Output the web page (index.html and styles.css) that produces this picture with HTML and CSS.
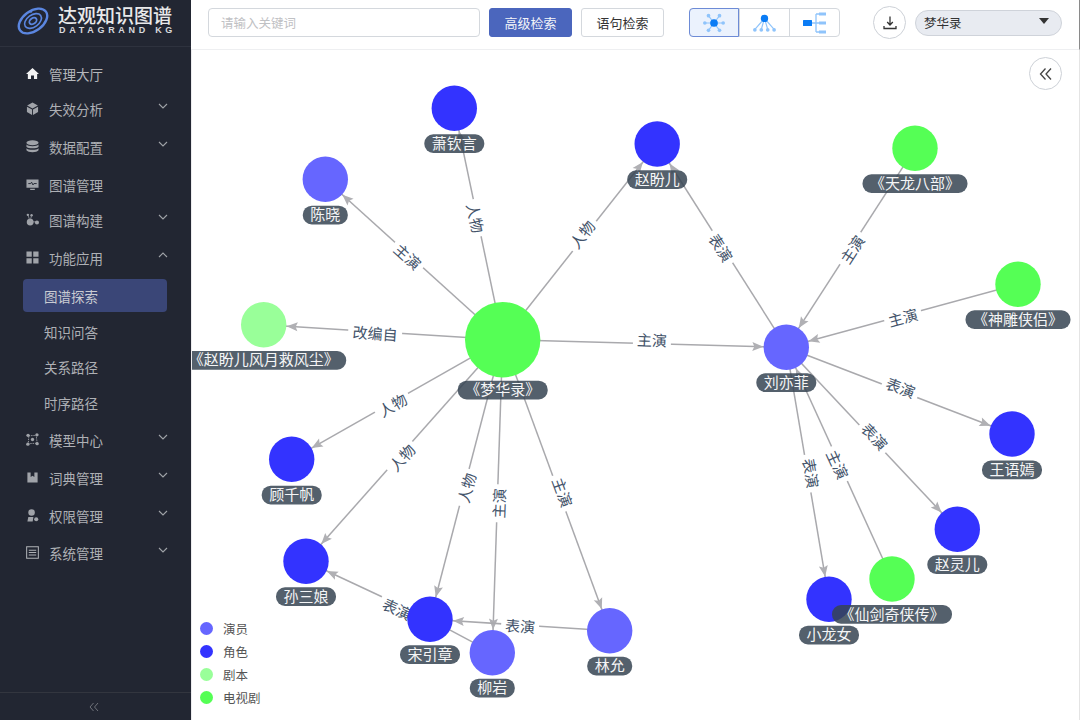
FILE: index.html
```html
<!DOCTYPE html>
<html lang="zh-CN">
<head>
<meta charset="utf-8">
<title>达观知识图谱</title>
<link rel="stylesheet" href="styles.css">
</head>
<body>
<div class="app">
  <aside class="sidebar">
    <div class="brand">
      <svg class="brand-mark" viewBox="0 0 32 28" width="32" height="28">
        <g fill="none" stroke="#5b86e0">
          <ellipse cx="16" cy="14" rx="16" ry="10" stroke-width="2.400" transform="rotate(-36 16 14)"/>
          <ellipse cx="16" cy="14" rx="9.500" ry="6" stroke-width="1.600" transform="rotate(-36 16 14)"/>
          <ellipse cx="16" cy="14" rx="4" ry="2.800" stroke-width="1.800" transform="rotate(-36 16 14)"/>
        </g>
        <circle cx="14" cy="4.500" r="1.200" fill="#5b86e0"/>
      </svg>
      <div class="brand-text">
        <div class="brand-cn">达观知识图谱</div>
        <div class="brand-en">DATAGRAND KG</div>
      </div>
    </div>
    <nav class="nav">
      <a class="item gap0">
        <svg class="ico" viewBox="0 0 14 14"><path d="M7 1.200 14 7.600H12V13H8.600V9.200H5.400V13H2V7.600H0Z" fill="#f2f2f2"/></svg>
        <span class="item-label lit">管理大厅</span>
      </a>
      <a class="item gap2">
        <svg class="ico" viewBox="0 0 14 14"><path d="M7 .5 12.800 3.800 7 7 1.200 3.800ZM1 5 6.500 8V14L1 10.800ZM13 5V10.800L7.500 14V8Z"/></svg>
        <span class="item-label">失效分析</span>
        <svg class="chev" viewBox="0 0 10 6"><path d="M1 1 5 5 9 1"/></svg>
      </a>
      <a class="item gap5">
        <svg class="ico" viewBox="0 0 14 14"><ellipse cx="7" cy="3" rx="6.500" ry="2.600"/><path d="M.5 4.800C2 7.200 12 7.200 13.500 4.800V7.200C12 9.400 2 9.400 .5 7.200ZM.5 8.800C2 11 12 11 13.500 8.800V11C12 13.800 2 13.800 .5 11Z"/></svg>
        <span class="item-label">数据配置</span>
        <svg class="chev" viewBox="0 0 10 6"><path d="M1 1 5 5 9 1"/></svg>
      </a>
      <a class="item gap5">
        <svg class="ico" viewBox="0 0 14 14"><path d="M.5 1.500H13.500V10.500H.5ZM4.500 11.500H9.500V13H4.500Z"/><path d="M2.500 6H5L6 4.500 7.500 7.500 8.500 6H11.500" fill="none" stroke="#222632"/></svg>
        <span class="item-label">图谱管理</span>
      </a>
      <a class="item gap2">
        <svg class="ico" viewBox="0 0 14 14"><circle cx="4.500" cy="9.800" r="3.700"/><circle cx="11.800" cy="10.300" r="2.200"/><circle cx="2" cy="2" r="1.300"/><circle cx="6" cy="2.500" r="1.300"/><path d="M2 2 4.500 9M6 2.500 4.500 9M4.500 9.500H12" stroke="#9a9da3" stroke-width=".8"/></svg>
        <span class="item-label">图谱构建</span>
        <svg class="chev" viewBox="0 0 10 6"><path d="M1 1 5 5 9 1"/></svg>
      </a>
      <a class="item gap5">
        <svg class="ico" viewBox="0 0 14 14"><path d="M.5.500H6.200V6.200H.5ZM7.800.500H13.500V6.200H7.800ZM.5 7.800H6.200V13.500H.5ZM7.800 7.800H13.500V13.500H7.800Z"/></svg>
        <span class="item-label">功能应用</span>
        <svg class="chev" viewBox="0 0 10 6"><path d="M1 5 5 1 9 5"/></svg>
      </a>
      <a class="item sub active gap5"><span class="item-label">图谱探索</span></a>
      <a class="item sub gap3"><span class="item-label">知识问答</span></a>
      <a class="item sub gap2"><span class="item-label">关系路径</span></a>
      <a class="item sub gap3"><span class="item-label">时序路径</span></a>
      <a class="item gap4">
        <svg class="ico" viewBox="0 0 14 14"><path d="M3 3 11 2.500 12 11 2.500 11.500Z" fill="none" stroke="#9a9da3" stroke-width="1" stroke-dasharray="1.500 1"/><circle cx="2.200" cy="2.500" r="1.800"/><circle cx="11.800" cy="2" r="1.800"/><circle cx="12" cy="11.500" r="1.800"/><circle cx="2" cy="12" r="1.800"/><circle cx="7" cy="7" r="1.800"/></svg>
        <span class="item-label">模型中心</span>
        <svg class="chev" viewBox="0 0 10 6"><path d="M1 1 5 5 9 1"/></svg>
      </a>
      <a class="item gap5">
        <svg class="ico" viewBox="0 0 14 14"><path d="M1.500 1.500H5V6.500L7 5 9 6.500V1.500H12.500V12.500H1.500Z"/></svg>
        <span class="item-label">词典管理</span>
        <svg class="chev" viewBox="0 0 10 6"><path d="M1 1 5 5 9 1"/></svg>
      </a>
      <a class="item gap5">
        <svg class="ico" viewBox="0 0 14 14"><circle cx="6" cy="3.800" r="3.500"/><path d="M1.500 13.500 2.500 8.500H8L7.200 13.500Z"/><circle cx="11" cy="11" r="2.200"/></svg>
        <span class="item-label">权限管理</span>
        <svg class="chev" viewBox="0 0 10 6"><path d="M1 1 5 5 9 1"/></svg>
      </a>
      <a class="item gap4">
        <svg class="ico" viewBox="0 0 14 14"><path d="M.7.700H13.300V13.300H.7ZM3 4.500H11M3 7H11M3 9.700H11" fill="none" stroke="#b0b2b7" stroke-width="1.100"/></svg>
        <span class="item-label">系统管理</span>
        <svg class="chev" viewBox="0 0 10 6"><path d="M1 1 5 5 9 1"/></svg>
      </a>
    </nav>
    <div class="side-foot">
      <svg class="foot-ico" viewBox="0 0 10 10" width="10" height="10"><path d="M4.500 1 1 5 4.500 9M9 1 5.500 5 9 9"/></svg>
    </div>
  </aside>

  <main class="main">
    <header class="topbar">
      <div class="search">请输入关键词</div>
      <button class="btn btn-primary">高级检索</button>
      <button class="btn">语句检索</button>
      <div class="layouts">
        <div class="layout-cell is-on">
          <svg viewBox="0 0 24 24" width="22" height="22">
            <g stroke="#8fc4fb" stroke-width="1.300"><path d="M12 12 5.500 3.500M12 12 18.500 3.500M12 12 1.500 12M12 12H22.500M12 12 5.500 20.500M12 12 18.500 20.500"/></g>
            <g fill="#8fc4fb"><circle cx="6" cy="4" r="2"/><circle cx="18" cy="4" r="2"/><circle cx="2" cy="12" r="2"/><circle cx="22" cy="12" r="2"/><circle cx="6" cy="20" r="2"/><circle cx="18" cy="20" r="2"/></g>
            <circle cx="12" cy="12" r="4.200" fill="#0a7cf5"/>
          </svg>
        </div>
        <div class="layout-cell">
          <svg viewBox="0 0 26 24" width="25" height="22">
            <g stroke="#8fc4fb" stroke-width="1.300"><path d="M13 7 2.500 19M13 7 9.500 19M13 7 16.500 19M13 7 23.500 19"/></g>
            <g fill="#8fc4fb"><circle cx="2.500" cy="19.500" r="2"/><circle cx="9.500" cy="19.500" r="2"/><circle cx="16.500" cy="19.500" r="2"/><circle cx="23.500" cy="19.500" r="2"/></g>
            <circle cx="13" cy="7" r="4" fill="#0a7cf5"/>
          </svg>
        </div>
        <div class="layout-cell">
          <svg viewBox="0 0 24 24" width="24" height="24">
            <path d="M9 12H13M13 3V21M13 3H16M13 12H16M13 21H16" fill="none" stroke="#8fc4fb" stroke-width="1.300"/>
            <rect x="0" y="9" width="9" height="6" rx=".5" fill="#0a7cf5"/>
            <g fill="#8fc4fb"><rect x="16" y="1.500" width="7" height="3"/><rect x="16" y="10.500" width="7" height="3"/><rect x="16" y="19.500" width="7" height="3"/></g>
          </svg>
        </div>
      </div>
      <button class="round-btn" aria-label="下载">
        <svg viewBox="0 0 16 16" width="16" height="16"><path d="M8 1.500V9.500M5.200 7 8 10 10.800 7M2 11V13.500H14V11" fill="none" stroke="#333" stroke-width="1.300"/></svg>
      </button>
      <div class="select">
        <span>梦华录</span>
        <i class="caret"></i>
      </div>
    </header>

    <section class="canvas">
      <svg class="graph" viewBox="191 50 889 670" width="889" height="670">
        <defs>
          <marker id="arrow" markerUnits="userSpaceOnUse" orient="auto" refX="23" refY="0" markerWidth="60" markerHeight="20" overflow="visible">
            <path d="M-11-4.500 0 0-11 4.500-9 0Z" fill="#b0b0b4"/>
          </marker>
        </defs>

        <g class="edges">
          <line x1="502.700" y1="339.700" x2="454.300" y2="108.300" marker-end="url(#arrow)"/>
          <line x1="502.700" y1="339.700" x2="325.300" y2="179.300" marker-end="url(#arrow)"/>
          <line x1="502.700" y1="339.700" x2="657.200" y2="144" marker-end="url(#arrow)"/>
          <line x1="502.700" y1="339.700" x2="263.700" y2="324.700" marker-end="url(#arrow)"/>
          <line x1="502.700" y1="339.700" x2="291.700" y2="459.300" marker-end="url(#arrow)"/>
          <line x1="502.700" y1="339.700" x2="306" y2="561.300" marker-end="url(#arrow)"/>
          <line x1="502.700" y1="339.700" x2="430" y2="619.300" marker-end="url(#arrow)"/>
          <line x1="502.700" y1="339.700" x2="492.300" y2="652.700" marker-end="url(#arrow)"/>
          <line x1="502.700" y1="339.700" x2="609.700" y2="630.700" marker-end="url(#arrow)"/>
          <line x1="502.700" y1="339.700" x2="786.300" y2="347.300" marker-end="url(#arrow)"/>
          <line x1="786.300" y1="347.300" x2="657.200" y2="144" marker-end="url(#arrow)"/>
          <line x1="915" y1="148.300" x2="786.300" y2="347.300" marker-end="url(#arrow)"/>
          <line x1="1018" y1="284.300" x2="786.300" y2="347.300" marker-end="url(#arrow)"/>
          <line x1="786.300" y1="347.300" x2="1012" y2="434" marker-end="url(#arrow)"/>
          <line x1="786.300" y1="347.300" x2="957.300" y2="529.300" marker-end="url(#arrow)"/>
          <line x1="892" y1="579" x2="786.300" y2="347.300" marker-end="url(#arrow)"/>
          <line x1="786.300" y1="347.300" x2="829" y2="599.300" marker-end="url(#arrow)"/>
          <line x1="609.700" y1="630.700" x2="430" y2="619.300" marker-end="url(#arrow)"/>
          <line x1="430" y1="619.300" x2="306" y2="561.300" marker-end="url(#arrow)"/>
          <line x1="492.300" y1="652.700" x2="430" y2="619.300"/>
        </g>

        <g class="edge-labels">
          <g transform="translate(474.300 218.300) rotate(78)"><rect x="-19" y="-10" width="38" height="20"/><text y="5">人物</text></g>
          <g transform="translate(407 257.300) rotate(42)"><rect x="-19" y="-10" width="38" height="20"/><text y="5">主演</text></g>
          <g transform="translate(583 235) rotate(-52)"><rect x="-19" y="-10" width="38" height="20"/><text y="5">人物</text></g>
          <g transform="translate(375 334.300) rotate(4)"><rect x="-27" y="-10" width="54" height="20"/><text y="5">改编自</text></g>
          <g transform="translate(393.300 406) rotate(-30)"><rect x="-19" y="-10" width="38" height="20"/><text y="5">人物</text></g>
          <g transform="translate(402.700 458.300) rotate(-48)"><rect x="-19" y="-10" width="38" height="20"/><text y="5">人物</text></g>
          <g transform="translate(467.700 488.300) rotate(-75)"><rect x="-19" y="-10" width="38" height="20"/><text y="5">人物</text></g>
          <g transform="translate(500 503.300) rotate(-88)"><rect x="-19" y="-10" width="38" height="20"/><text y="5">主演</text></g>
          <g transform="translate(561.700 492.700) rotate(70)"><rect x="-19" y="-10" width="38" height="20"/><text y="5">主演</text></g>
          <g transform="translate(652 341) rotate(2)"><rect x="-19" y="-10" width="38" height="20"/><text y="5">主演</text></g>
          <g transform="translate(720 248.300) rotate(57)"><rect x="-19" y="-10" width="38" height="20"/><text y="5">表演</text></g>
          <g transform="translate(853 250) rotate(-57)"><rect x="-19" y="-10" width="38" height="20"/><text y="5">主演</text></g>
          <g transform="translate(903.300 318.300) rotate(-15)"><rect x="-19" y="-10" width="38" height="20"/><text y="5">主演</text></g>
          <g transform="translate(900.300 388.700) rotate(21)"><rect x="-19" y="-10" width="38" height="20"/><text y="5">表演</text></g>
          <g transform="translate(874 437.300) rotate(47)"><rect x="-19" y="-10" width="38" height="20"/><text y="5">表演</text></g>
          <g transform="translate(836.700 465) rotate(65)"><rect x="-19" y="-10" width="38" height="20"/><text y="5">主演</text></g>
          <g transform="translate(810 473.300) rotate(80)"><rect x="-19" y="-10" width="38" height="20"/><text y="5">表演</text></g>
          <g transform="translate(520 627) rotate(4)"><rect x="-19" y="-10" width="38" height="20"/><text y="5">表演</text></g>
          <g transform="translate(396.700 610) rotate(25)"><rect x="-19" y="-10" width="38" height="20"/><text y="5">表演</text></g>
        </g>

        <g class="nodes">
          <g transform="translate(454.300 108.300)"><circle r="22.700" class="role"/><rect x="-30" y="26" width="60" height="18.700" rx="9"/><text y="40.500">萧钦言</text></g>
          <g transform="translate(325.300 179.300)"><circle r="22.700" class="actor"/><rect x="-22.500" y="26.400" width="45" height="18.700" rx="9"/><text y="40.900">陈晓</text></g>
          <g transform="translate(657.200 144)"><circle r="22.700" class="role"/><rect x="-30" y="26.300" width="60" height="18.700" rx="9"/><text y="40.800">赵盼儿</text></g>
          <g transform="translate(263.700 324.700)"><circle r="22.700" class="script"/><rect x="-82.500" y="26.300" width="165" height="18.700" rx="9"/><text y="40.800">《赵盼儿风月救风尘》</text></g>
          <g transform="translate(502.700 339.700)"><circle r="37.700" class="drama"/><rect x="-45" y="41" width="90" height="18.700" rx="9"/><text y="55.500">《梦华录》</text></g>
          <g transform="translate(291.700 459.300)"><circle r="22.700" class="role"/><rect x="-30" y="26.400" width="60" height="18.700" rx="9"/><text y="40.900">顾千帆</text></g>
          <g transform="translate(306 561.300)"><circle r="22.700" class="role"/><rect x="-30" y="26" width="60" height="18.700" rx="9"/><text y="40.500">孙三娘</text></g>
          <g transform="translate(430 619.300)"><circle r="22.700" class="role"/><rect x="-30" y="26" width="60" height="18.700" rx="9"/><text y="40.500">宋引章</text></g>
          <g transform="translate(492.300 652.700)"><circle r="22.700" class="actor"/><rect x="-22.500" y="26" width="45" height="18.700" rx="9"/><text y="40.500">柳岩</text></g>
          <g transform="translate(609.700 630.700)"><circle r="22.700" class="actor"/><rect x="-22.500" y="26" width="45" height="18.700" rx="9"/><text y="40.500">林允</text></g>
          <g transform="translate(786.300 347.300)"><circle r="22.700" class="actor"/><rect x="-30" y="26" width="60" height="18.700" rx="9"/><text y="40.500">刘亦菲</text></g>
          <g transform="translate(915 148.300)"><circle r="22.700" class="drama"/><rect x="-52.500" y="26" width="105" height="18.700" rx="9"/><text y="40.500">《天龙八部》</text></g>
          <g transform="translate(1018 284.300)"><circle r="22.700" class="drama"/><rect x="-52.500" y="26" width="105" height="18.700" rx="9"/><text y="40.500">《神雕侠侣》</text></g>
          <g transform="translate(1012 434)"><circle r="22.700" class="role"/><rect x="-30" y="26.500" width="60" height="18.700" rx="9"/><text y="41">王语嫣</text></g>
          <g transform="translate(957.300 529.300)"><circle r="22.700" class="role"/><rect x="-30" y="26" width="60" height="18.700" rx="9"/><text y="40.500">赵灵儿</text></g>
          <g transform="translate(829 599.300)"><circle r="22.700" class="role"/><rect x="-30" y="26.400" width="60" height="18.700" rx="9"/><text y="40.900">小龙女</text></g>
          <g transform="translate(892 579)"><circle r="22.700" class="drama"/><rect x="-60" y="26" width="120" height="18.700" rx="9"/><text y="40.500">《仙剑奇侠传》</text></g>
        </g>
      </svg>

      <button class="round-btn collapse" aria-label="收起">
        <svg viewBox="0 0 14 14" width="14" height="14"><path d="M6.500 1.500 1.500 7 6.500 12.500M12 1.500 7 7 12 12.500" fill="none" stroke="#444" stroke-width="1.300"/></svg>
      </button>

      <ul class="legend">
        <li><i class="dot actor-bg"></i>演员</li>
        <li><i class="dot role-bg"></i>角色</li>
        <li><i class="dot script-bg"></i>剧本</li>
        <li><i class="dot drama-bg"></i>电视剧</li>
      </ul>
    </section>
  </main>
</div>
</body>
</html>
```
FILE: styles.css
```css
* { box-sizing: border-box; }
html, body { margin: 0; height: 100%; overflow: hidden; background: #fff; }
body { font-family: "Noto Sans CJK SC", "Noto Sans", "Liberation Sans", sans-serif; }

.app { display: flex; width: 1080px; height: 720px; }

/* sidebar */
.sidebar { width: 191px; flex: none; background: #222632; display: flex; flex-direction: column; }
.brand { height: 47px; flex: none; display: flex; align-items: center; gap: 9px; padding: 0 0 4px 17px; border-bottom: 1px solid #2e323e; }
.brand-mark { flex: none; }
.brand-text { display: flex; flex-direction: column; margin-top: -2px; }
.brand-cn { font-size: 19px; line-height: 20px; font-weight: 500; color: #e9e9ea; white-space: nowrap; }
.brand-en { font-family: "Liberation Sans", sans-serif; font-size: 9px; line-height: 10px; letter-spacing: 3.7px; padding-left: 1px; color: #d8d9dc; white-space: nowrap; font-weight: 700; }

.nav { flex: 1; padding-top: 10px; display: flex; flex-direction: column; }
.item { display: flex; align-items: center; height: 33px; flex: none; padding-left: 26px; position: relative; color: #aeb0b5; font-size: 13.5px; }
.gap0 { margin-top: 0; }
.gap2 { margin-top: 2px; }
.gap3 { margin-top: 3px; }
.gap4 { margin-top: 4px; }
.gap5 { margin-top: 5px; }
.ico { width: 13px; height: 13px; flex: none; fill: #a0a3a9; margin-right: 10px; }
.item-label.lit { color: #b5b7bb; }
.chev { position: absolute; left: 158px; top: 11px; width: 10px; height: 6px; fill: none; stroke: #a0a3a8; stroke-width: 1.100; }
.sub { margin-left: 23px; width: 144px; padding-left: 21px; border-radius: 4px; }
.sub.active { background: #3a4677; color: #c9cbd2; }

.side-foot { height: 28px; flex: none; border-top: 1px solid #33363f; display: flex; justify-content: center; align-items: center; padding-right: 3px; }
.foot-ico { fill: none; stroke: #6f727a; stroke-width: 1; }

/* main */
.main { flex: 1; min-width: 0; display: flex; flex-direction: column; }
.topbar { height: 50px; flex: none; display: flex; align-items: center; padding: 0 0 4px 17px; border-bottom: 1px solid #eeeff1; border-right: 1px solid #8a8a8a; }
.search { width: 272px; height: 29px; border: 1px solid #d4d8dd; border-radius: 4px; padding-left: 12px; font-size: 12.5px; line-height: 27px; color: #bfc1c4; }
.btn { width: 83px; height: 29px; margin-left: 9px; padding: 0; background: #fff; border: 1px solid #d4d8dd; border-radius: 3px; font: inherit; font-size: 13px; color: #333; }
.btn-primary { background: #4b66bd; border-color: #4b66bd; color: #f3f4f8; }
.layouts { display: flex; width: 151px; height: 29px; margin-left: 25px; border: 1px solid #d4d8dd; border-radius: 4px; }
.layout-cell { flex: 1; display: flex; align-items: center; justify-content: center; border-left: 1px solid #d4d8dd; }
.layout-cell:first-child { border-left: none; }
.layout-cell.is-on { flex: none; width: 50px; margin: -1px 0 -1px -1px; border: 1px solid #6d8bd6; border-radius: 4px 0 0 4px; background: #ebf2fd; }
.round-btn { width: 33px; height: 33px; padding: 0; border: 1px solid #cdd1d7; border-radius: 50%; background: #fff; display: flex; align-items: center; justify-content: center; }
.topbar .round-btn { margin-left: 33px; }
.select { width: 147px; height: 26px; margin-left: 9px; padding: 0 11px 0 8px; display: flex; align-items: center; justify-content: space-between; background: #e8ebf1; border: 1px solid #cfd3da; border-radius: 13px; font-size: 12.5px; color: #333; }
.caret { width: 0; height: 0; border-left: 5px solid transparent; border-right: 5px solid transparent; border-top: 6px solid #333; margin-top: -4px; margin-right: 1px; }

/* canvas */
.canvas { flex: 1; position: relative; overflow: hidden; border-left: 1px solid #ececee; border-right: 1px solid #e4e4e4; }
.graph { display: block; margin-left: -1px; }
.edges line { stroke: #a9a9ad; stroke-width: 1.500; }
.edge-labels rect { fill: #fff; }
.edge-labels text { font-size: 15px; fill: #43536a; text-anchor: middle; }
.nodes rect { fill: rgb(54, 68, 82); fill-opacity: .85; }
.nodes text { font-size: 15px; fill: #f4f5f6; text-anchor: middle; }
.role { fill: #3333ff; }
.actor { fill: #6666ff; }
.script { fill: #99ff99; }
.drama { fill: #55ff55; }
.collapse { position: absolute; right: 17px; top: 7px; }

.legend { position: absolute; left: 8px; top: 567px; margin: 0; padding: 0; list-style: none; font-size: 12.5px; color: #555; }
.legend li { display: flex; align-items: center; height: 23px; gap: 10px; }
.dot { width: 13px; height: 13px; border-radius: 50%; flex: none; }
.role-bg { background: #3333ff; }
.actor-bg { background: #6666ff; }
.script-bg { background: #99ff99; }
.drama-bg { background: #55ff55; }
```
